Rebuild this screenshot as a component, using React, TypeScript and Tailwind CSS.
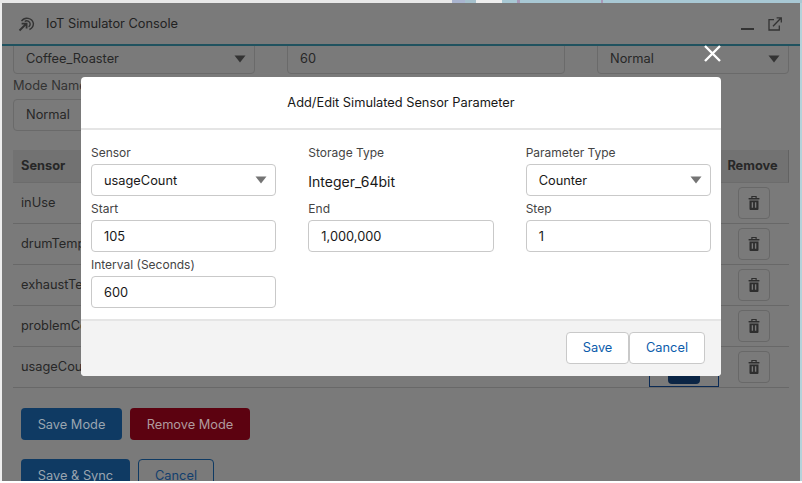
const font = { fontFamily: "Inter, sans-serif" }

const Caret = ({ color }: { color: string }) => (
  <svg width="12" height="8" viewBox="0 0 12 8" className="shrink-0">
    <path d="M0.5 0.5h11L6 7.5z" fill={color} />
  </svg>
)

const TrashIcon = () => (
  <svg width="12" height="14" viewBox="0 0 12 14" fill="#2e2e2e">
    <path d="M4.5 2V1h3v1h1.2V0H3.3v2z" />
    <rect x="0.5" y="2" width="11" height="1.4" rx="0.4" />
    <path d="M1.5 4.4h9V13a1 1 0 0 1-1 1h-7a1 1 0 0 1-1-1zM3.7 6.2v5.6h1.4V6.2zm3.2 0v5.6h1.4V6.2z" fillRule="evenodd" />
  </svg>
)

const BgSelect = ({ value, className }: { value: string; className: string }) => (
  <div className={`h-8 flex items-center justify-between pl-[12px] pr-[8px] pt-[2px] rounded border border-[#6a6a6a] ${className}`}>
    <span>{value}</span>
    <Caret color="#333333" />
  </div>
)

const rows = ["inUse", "drumTemp", "exhaustTemp", "problemCount", "usageCount"]

const Background = () => (
  <div className="flex-1 min-h-0 overflow-hidden px-[11px] text-[12.8px] text-[#272727]">
    <div className="-mt-[4px] flex gap-8">
      <BgSelect value="Coffee_Roaster" className="w-[242px]" />
      <div className="w-[278px] h-8 flex items-center pl-[12px] pt-[2px] rounded border border-[#6a6a6a]">60</div>
      <BgSelect value="Normal" className="w-[192px]" />
    </div>
    <div className="mt-[2px] h-5 leading-5 text-[#333333]">Mode Name</div>
    <div className="mt-[3px] h-8 w-[240px] flex items-center pl-[12px] rounded border border-[#6a6a6a]">Normal</div>
    <div className="mt-[19px] w-[776px]">
      <div className="h-[33px] flex items-center justify-between pl-2 bg-[#727272] border-r border-[#626262] border-b border-b-[#6c6c6c] font-bold">
        <span>Sensor</span>
        <span className="w-[61px] mr-[5px] text-center">Remove</span>
      </div>
      {rows.map((name, i) => (
        <div key={name} className="relative h-[41px] flex items-center justify-between pl-2 pr-[19px] border-b border-[#686868]">
          <span>{name}</span>
          {i === 4 && (
            <div className="absolute left-[636px] bottom-0 w-[70px] h-6 border border-[#0a2a55] flex justify-center">
              <div className="w-8 h-5 bg-[#0b2545] rounded-b" />
            </div>
          )}
          <button className="w-8 h-8 flex items-center justify-center rounded border border-[#686868]">
            <TrashIcon />
          </button>
        </div>
      ))}
    </div>
    <div className="mt-[20px] ml-2 flex gap-2">
      <button className="h-8 w-[101px] pt-[2px] rounded bg-[#0f3a63] text-[#9aa5b0]">Save Mode</button>
      <button className="h-8 w-[120px] pt-[2px] rounded bg-[#5c0210] text-[#b09a9e]">Remove Mode</button>
    </div>
    <div className="mt-[19px] ml-2 flex gap-2">
      <button className="h-8 w-[109px] pt-[2px] rounded bg-[#0f3a63] text-[#9aa5b0]">Save &amp; Sync</button>
      <button className="h-8 w-[76px] pt-[2px] rounded border border-[#0f3a63] text-[#123f6e]">Cancel</button>
    </div>
  </div>
)

const Field = ({ label, value, select }: { label: string; value: string; select?: boolean }) => (
  <div>
    <div className="h-5 leading-[18px] text-[12px] text-[#444444]">{label}</div>
    <div className="h-8 flex items-center justify-between pl-[12px] pr-[8px] rounded border border-[#c9c9c9] bg-white text-[12.8px] text-[#181818]">
      <span className="pt-[2px]">{value}</span>
      {select && <Caret color="#747474" />}
    </div>
  </div>
)

const Modal = () => (
  <div className="absolute left-[81px] top-[77px] w-[640px] h-[299px] flex flex-col rounded bg-white">
    <button className="absolute -top-[32px] right-0 text-white">
      <svg width="17" height="17" viewBox="0 0 17 17" stroke="white" strokeWidth="2.4" className="block">
        <path d="M1 1l15 15M16 1L1 16" />
      </svg>
    </button>
    <div className="h-[53px] shrink-0 flex items-center justify-center border-b-2 border-[#e5e5e5] text-[12.8px] text-[#181818]">
      Add/Edit Simulated Sensor Parameter
    </div>
    <div className="flex-1 min-h-0 grid grid-cols-3 gap-x-8 gap-y-1 px-[10px] pt-[14px] content-start">
      <Field label="Sensor" value="usageCount" select />
      <div>
        <div className="h-5 leading-[18px] text-[12px] text-[#444444]">Storage Type</div>
        <div className="h-8 flex items-center pt-[2px] text-[14px] text-[#181818]">Integer_64bit</div>
      </div>
      <Field label="Parameter Type" value="Counter" select />
      <Field label="Start" value="105" />
      <Field label="End" value="1,000,000" />
      <Field label="Step" value="1" />
      <Field label="Interval (Seconds)" value="600" />
    </div>
    <div className="h-[57px] shrink-0 flex items-center justify-end pr-[16px] pb-[1px] bg-[#f3f3f3] border-t-2 border-[#e5e5e5] rounded-b text-[12.8px] text-[#0b5cab]">
      <button className="h-8 w-[63px] rounded border border-[#c9c9c9] bg-white">Save</button>
      <button className="h-8 w-[76px] rounded border border-[#c9c9c9] bg-white">Cancel</button>
    </div>
  </div>
)

export default function App() {
  return (
    <div className="relative w-[802px] h-[483px] overflow-hidden bg-white" style={font}>
      <div className="h-[3px] flex">
        <div className="w-[452px] bg-[#e8e8e8]" />
        <div className="w-[13px] bg-[#a9b4cf]" />
        <div className="w-[11px] bg-[#a5c0cc]" />
        <div className="w-[26px] bg-[#eeeeee]" />
        <div className="w-[15px] bg-[#a8c8d4]" />
        <div className="w-[3px] bg-[#a898b8]" />
        <div className="w-[81px] bg-[#a8c8d4]" />
        <div className="w-[2px] bg-[#a898b8]" />
        <div className="flex-1 bg-[#a8c8d4]" />
      </div>
      <div className="flex h-[478px]">
        <div className="w-[2px] bg-[#eeeeee]" />
        <div className="flex-1 flex flex-col bg-[#7a7a7a] min-w-0">
          <div className="h-[43px] shrink-0 flex items-center justify-between pl-[16px] pr-[18px] border-b-2 border-[#20525f] bg-[#7a7a7a]">
            <div className="flex items-center gap-[11px] text-[12.8px] text-[#222222]">
              <svg width="17" height="17" viewBox="0 0 17 17" fill="none" stroke="#333333" strokeWidth="1.4">
                <path d="M3.5 6.2A6.6 6.6 0 0 1 15.4 8.5a6.6 6.6 0 0 1-4 6" />
                <path d="M6.7 6.5A3.4 3.4 0 0 1 12.2 9a3.4 3.4 0 0 1-1.6 2.8" />
                <path d="M1.5 15.5L8 9M3.6 8.6H8.6V13.6" strokeWidth="1.8" />
              </svg>
              <span>IoT Simulator Console</span>
            </div>
            <div className="flex items-end gap-[14px]">
              <div className="w-[13px] h-[1.5px] bg-[#333333] mb-[1px]" />
              <svg width="14" height="14" viewBox="0 0 14 14" fill="none" stroke="#333333" strokeWidth="1.3">
                <path d="M6 2.7H1v10.3h10.3V8.6" />
                <path d="M5 9.2L13 1M8.6 .8h4.7v4.7" />
              </svg>
            </div>
          </div>
          <Background />
        </div>
        <div className="w-[2px] bg-[#b4d2da]" />
      </div>
      <Modal />
    </div>
  )
}
